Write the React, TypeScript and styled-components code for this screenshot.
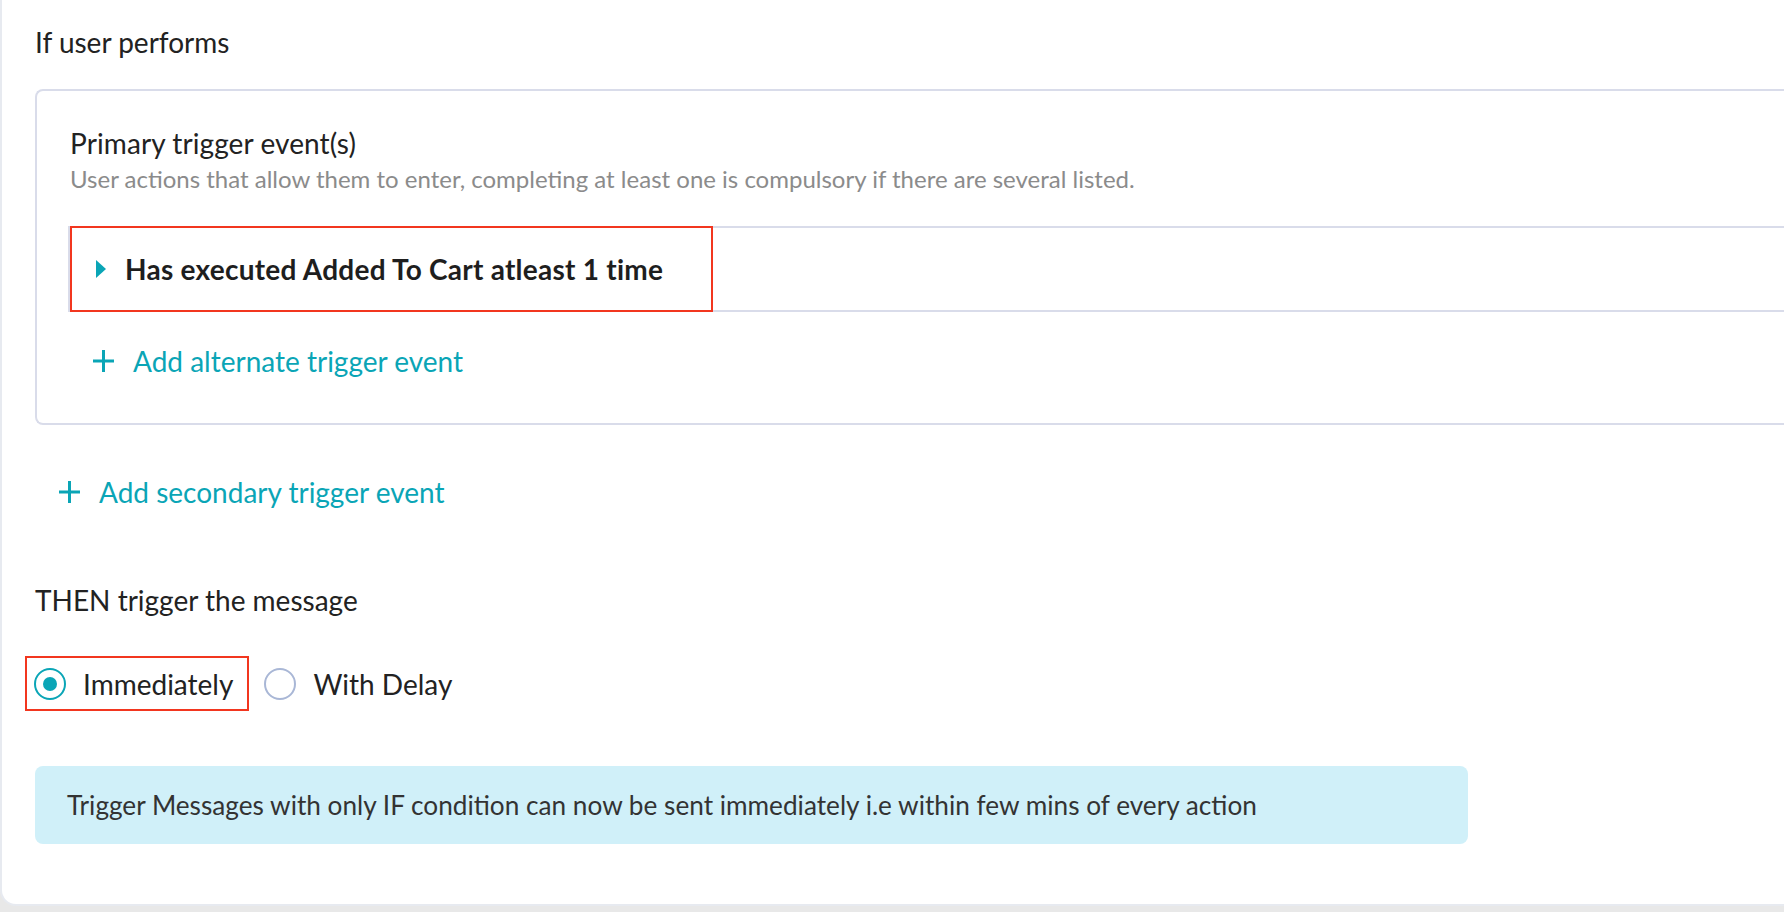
import React from "react";
import styled, { createGlobalStyle } from "styled-components";

const GlobalStyle = createGlobalStyle`
  html, body {
    margin: 0;
    padding: 0;
    background: #e8e8e8;
    overflow: hidden;
  }
  body {
    font-family: "Lato", "Noto Sans", sans-serif;
    color: #212121;
  }
  * { box-sizing: border-box; }
`;

const teal = "#0aa5b6";

const Page = styled.div`
  width: calc(100% + 40px);
  height: 906px;
  background: #ffffff;
  border-left: 2px solid #e7eaf0;
  border-bottom: 2px solid #e7eaf0;
  border-bottom-left-radius: 16px;
  padding: 24px 0 0 33px;
  display: flex;
  flex-direction: column;
`;

const SectionLabel = styled.div<{ $top?: number }>`
  font-size: 28px;
  line-height: 36px;
  color: #222222;
  margin-top: ${(p) => p.$top ?? 0}px;
`;

const Panel = styled.div`
  border: 2px solid #d9dcea;
  border-right: none;
  border-radius: 8px 0 0 8px;
  margin-top: 29px;
  padding: 34px 0 0 33px;
  height: 336px;
`;

const PanelTitle = styled.div`
  font-size: 28px;
  line-height: 36px;
  color: #222222;
  letter-spacing: 0.1px;
`;

const PanelHint = styled.div`
  font-size: 24px;
  line-height: 30px;
  color: #8b8b8b;
  margin-top: 3px;
`;

const EventRow = styled.div`
  position: relative;
  margin-top: 32px;
  margin-left: -2px;
  height: 86px;
  border: 2px solid #d9dcea;
  border-right: none;
  display: flex;
  align-items: center;
  padding-left: 26px;
  gap: 19px;
  font-size: 28px;
  font-weight: 700;
  letter-spacing: 0.25px;
  color: #1e1e1e;
`;

const Highlight = styled.span`
  position: absolute;
  left: 0;
  top: -2px;
  width: 643px;
  height: 86px;
  border: 2px solid #f2361f;
  pointer-events: none;
`;

const Caret = styled.svg`
  width: 10px;
  height: 18px;
  flex: none;
`;

const AddLink = styled.button<{ $top: number; $indent: number }>`
  display: flex;
  align-items: center;
  gap: 18px;
  margin-top: ${(p) => p.$top}px;
  margin-left: ${(p) => p.$indent}px;
  padding: 0;
  border: none;
  background: none;
  font-family: inherit;
  font-size: 28px;
  line-height: 36px;
  color: ${teal};
  cursor: pointer;
  align-self: flex-start;
`;

const PlusIcon = styled.svg`
  width: 23px;
  height: 24px;
  flex: none;
`;

const RadioGroup = styled.div`
  display: flex;
  align-items: center;
  gap: 6px;
  margin-top: 38px;
  margin-left: -10px;
`;

const RadioOption = styled.label<{ $marked?: boolean }>`
  display: flex;
  align-items: center;
  gap: 17px;
  height: 55px;
  padding: 0 14px 0 7px;
  border: 2px solid ${(p) => (p.$marked ? "#f2361f" : "transparent")};
  font-size: 28px;
  color: #222222;
  cursor: pointer;
`;

const RadioCircle = styled.span<{ $checked?: boolean }>`
  width: 32px;
  height: 32px;
  border-radius: 50%;
  border: 2px solid ${(p) => (p.$checked ? teal : "#a9b7d6")};
  display: flex;
  align-items: center;
  justify-content: center;
  flex: none;
  &::after {
    content: "";
    width: 14px;
    height: 14px;
    border-radius: 50%;
    background: ${(p) => (p.$checked ? teal : "transparent")};
  }
`;

const InfoBanner = styled.div`
  margin-top: 55px;
  width: 1433px;
  height: 78px;
  background: #d0f0f9;
  border-radius: 8px;
  display: flex;
  align-items: center;
  padding-left: 32px;
  font-size: 26.2px;
  color: #333333;
`;

const Plus = () => (
  <PlusIcon viewBox="0 0 23 24" aria-hidden>
    <path d="M11.5 1v22M1 12h21" stroke={teal} strokeWidth="3" fill="none" />
  </PlusIcon>
);

export default function App() {
  return (
    <>
      <GlobalStyle />
      <Page>
        <SectionLabel>If user performs</SectionLabel>
        <Panel>
          <PanelTitle>Primary trigger event(s)</PanelTitle>
          <PanelHint>
            User actions that allow them to enter, completing at least one is compulsory if there are several listed.
          </PanelHint>
          <EventRow>
            <Highlight />
            <Caret viewBox="0 0 10 18" aria-hidden>
              <path d="M0 0L10 9L0 18Z" fill={teal} />
            </Caret>
            Has executed Added To Cart atleast 1 time
          </EventRow>
          <AddLink $top={31} $indent={22}>
            <Plus />
            Add alternate trigger event
          </AddLink>
        </Panel>
        <AddLink $top={49} $indent={23}>
          <Plus />
          Add secondary trigger event
        </AddLink>
        <SectionLabel $top={72}>THEN trigger the message</SectionLabel>
        <RadioGroup>
          <RadioOption $marked>
            <RadioCircle $checked />
            Immediately
          </RadioOption>
          <RadioOption>
            <RadioCircle />
            With Delay
          </RadioOption>
        </RadioGroup>
        <InfoBanner>
          Trigger Messages with only IF condition can now be sent immediately i.e within few mins of every action
        </InfoBanner>
      </Page>
    </>
  );
}
